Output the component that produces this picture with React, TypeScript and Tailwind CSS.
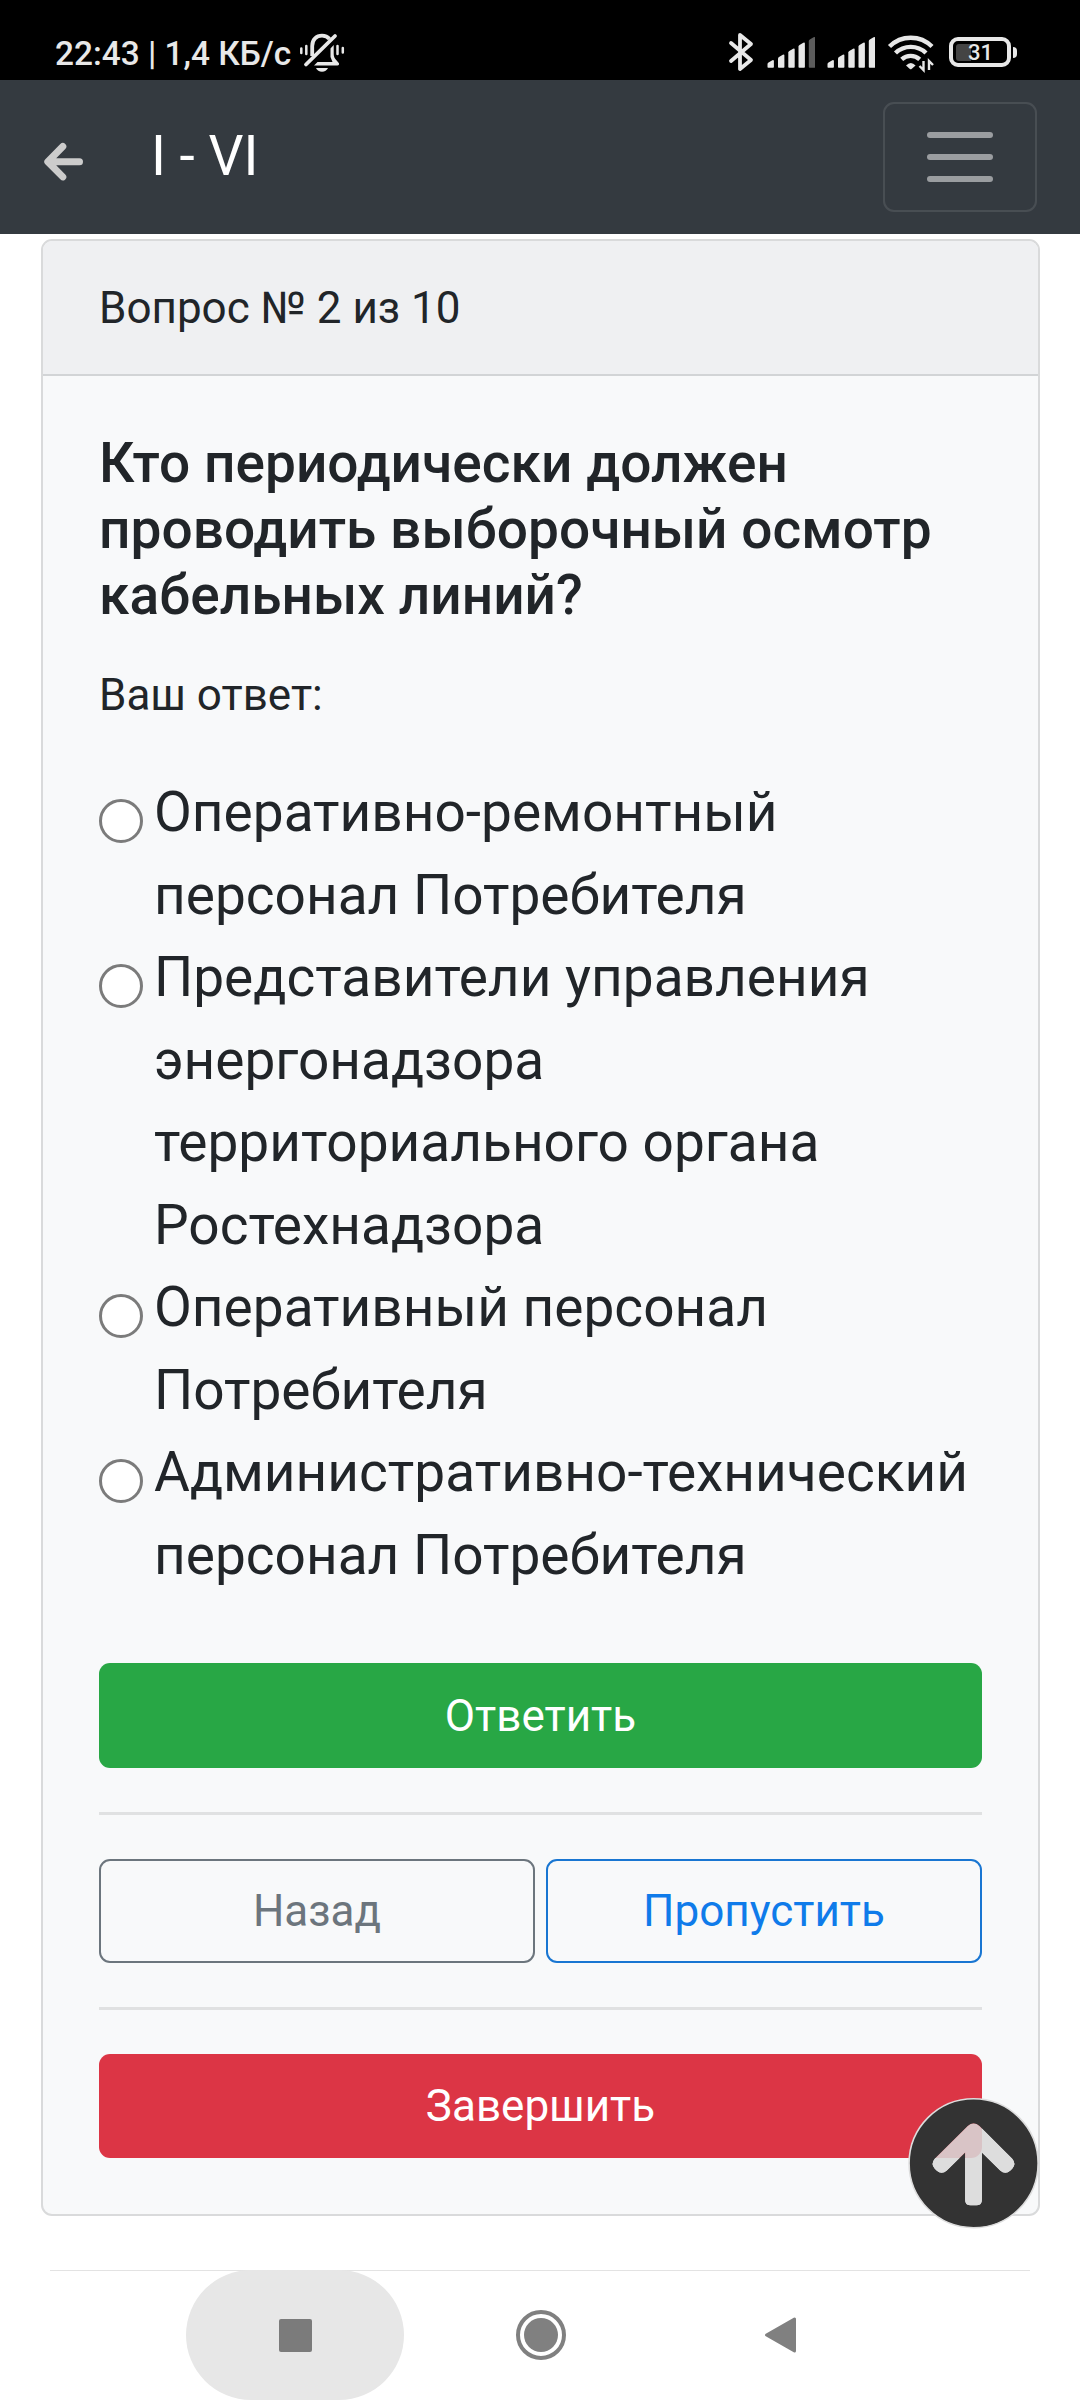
const answers = [
  "Оперативно-ремонтный персонал Потребителя",
  "Представители управления энергонадзора территориального органа Ростехнадзора",
  "Оперативный персонал Потребителя",
  "Административно-технический персонал Потребителя",
];

const signalBars = [
  { x: 767.5, top: 60 },
  { x: 778, top: 54.5 },
  { x: 788.3, top: 48.5 },
  { x: 798.5, top: 42.5 },
  { x: 808.8, top: 37 },
];

function BellOffIcon() {
  return (
    <svg className="ml-2 h-[45px] w-[46px]" viewBox="299 30 46 45" fill="none" stroke="#e8e8e8">
      <path d="M312.200 56V46c0-6.500 4.300-10.300 9.800-10.300 3.200 0 5.800 1.200 7.500 3.200" strokeWidth="3.800" />
      <path d="M330.500 48.500l3.200-3.500v9c0 2.500 1 4.500 2.500 6l2.800 3.200q.5 2.300-1.500 2.300H314l3.500-3.500h15l-2-5z" fill="#e8e8e8" stroke="none" />
      <path d="M335 36L306 64.500" strokeWidth="3.800" strokeLinecap="round" />
      <path d="M316 68h12c-1 2.400-3.300 3.700-6 3.700s-5-1.300-6-3.700z" fill="#e8e8e8" stroke="none" />
      <path d="M301.300 48.500v4.500M306.300 46v8M337.500 46v8M342.800 48v4.500" strokeWidth="2.500" strokeLinecap="round" />
    </svg>
  );
}

function BluetoothIcon() {
  return (
    <svg className="h-[45px] w-[26px]" viewBox="728 30 26 45" fill="none" stroke="#e8e8e8">
      <path
        d="M731 43l20 17-11 9V35l11 9-20 17"
        strokeWidth="3.800"
        strokeLinecap="round"
        strokeLinejoin="round"
      />
    </svg>
  );
}

function SignalIcon({ weak = false }: { weak?: boolean }) {
  return (
    <svg className="h-[45px] w-[48px]" viewBox="767 30 48 45">
      {signalBars.map((bar, i) => (
        <path
          key={bar.x}
          d={`M${bar.x} 67V${bar.top + 4}q0-1 1-1.600l3.800-2.200q1.600-.6 1.600 1V67q0 .8-.8.8h-4.800q-.8 0-.8-.8z`}
          fill={weak && i === 4 ? "#5c5c5c" : "#e8e8e8"}
        />
      ))}
    </svg>
  );
}

function WifiIcon() {
  return (
    <svg className="h-[45px] w-[48px]" viewBox="887 30 48 45" fill="none" stroke="#e8e8e8">
      <path d="M889.500 46.500a30 30 0 0 1 42.500 0" strokeWidth="4.400" />
      <path d="M895.500 53a22 22 0 0 1 30.500 0" strokeWidth="4.400" />
      <path d="M901.700 59.300a13.500 13.500 0 0 1 18 0" strokeWidth="4.400" />
      <path d="M906 65.500q4.800-5 9.600 0L911.500 69q-.8.600-1.600 0z" fill="#e8e8e8" stroke="none" />
      <path d="M923.500 61v9l-4-4M929 70V61l4 4" strokeWidth="2.400" />
    </svg>
  );
}

function Battery() {
  return (
    <div className="mt-[7px] flex items-center gap-0.5">
      <div className="flex h-[30px] w-[62px] items-center rounded-[9px] border-4 border-[#e8e8e8] pl-[3px]">
        <div className="h-[17px] w-[15px] rounded-l-[3px] bg-[#444]" />
        <span className="-ml-[3px] pt-0.5 text-[22px] leading-[22px] font-medium text-[#e8e8e8]">31</span>
      </div>
      <div className="h-[11px] w-1 rounded-r-sm bg-[#e8e8e8]" />
    </div>
  );
}

function StatusBar() {
  return (
    <div className="flex h-20 items-start bg-black pt-[30px] pr-[63px] pl-[55px]">
      <span className="mt-[7px] text-[33.4px] leading-[34px] font-medium whitespace-nowrap text-[#e8e8e8]">
        22:43 | 1,4 КБ/с
      </span>
      <BellOffIcon />
      <div className="ml-auto flex items-start">
        <BluetoothIcon />
        <div className="ml-[13px]">
          <SignalIcon weak />
        </div>
        <div className="ml-[12px]">
          <SignalIcon />
        </div>
        <div className="ml-[12px]">
          <WifiIcon />
        </div>
        <div className="ml-[14px]">
          <Battery />
        </div>
      </div>
    </div>
  );
}

function Navbar() {
  return (
    <header className="flex h-[154px] items-center bg-[#343a40] pr-[43px] pl-[43px]">
      <button className="mt-[9px]" aria-label="Назад">
        <svg className="h-10 w-[42px]" viewBox="43 142 42 40" fill="none" stroke="#ccc">
          <path
            d="M62.800 146.500L47.800 161.700l15 15.200M49 161.700h30.500"
            strokeWidth="7"
            strokeLinecap="round"
            strokeLinejoin="round"
          />
        </svg>
      </button>
      <h1 className="ml-[66px] pb-0.5 text-[55px] leading-[82px] text-white">I - VI</h1>
      <button
        className="ml-auto flex h-[110px] w-[154px] flex-col items-center justify-center gap-4 rounded-[11px] border-2 border-white/10"
        aria-label="Меню"
      >
        <span className="h-1.5 w-[66px] rounded-full bg-white/50" />
        <span className="h-1.5 w-[66px] rounded-full bg-white/50" />
        <span className="h-1.5 w-[66px] rounded-full bg-white/50" />
      </button>
    </header>
  );
}

function QuestionCard() {
  return (
    <section className="mt-[5px] ml-[41px] w-[999px] rounded-[11px] border-2 border-[#d9dadb] bg-[#f8f9fa]">
      <div className="h-[135px] rounded-t-[9px] border-b-2 border-[#d2d4d6] bg-[#eff0f2] px-14 pt-[34px] leading-[66px]">
        Вопрос № 2 из 10
      </div>
      <div className="px-14 pt-[54px] pb-14">
        <h2 className="text-[55px] leading-[66px] font-medium tracking-[0.05px]">
          Кто периодически должен проводить выборочный осмотр кабельных линий?
        </h2>
        <p className="mt-[34px] leading-[66px]">Ваш ответ:</p>

        <div className="mt-[43px] text-[55px] leading-[82.5px]">
          {answers.map((answer) => (
            <label key={answer} className="flex items-start">
              <input
                type="radio"
                name="answer"
                className="mt-7 size-11 shrink-0 appearance-none rounded-full border-3 border-[#7b7b7b] bg-white"
              />
              <span className="ml-[11px]">{answer}</span>
            </label>
          ))}
        </div>

        <button className="mt-[67px] h-[105px] w-full rounded-[11px] bg-[#28a745] text-white">
          Ответить
        </button>
        <hr className="mt-11 border-t-3 border-[#e0e1e2]" />
        <div className="mt-11 flex gap-[11px]">
          <button className="h-[104px] flex-1 rounded-[11px] border-2 border-[#6c757d] text-[#6c757d]">
            Назад
          </button>
          <button className="h-[104px] flex-1 rounded-[11px] border-2 border-[#1976d2] text-[#0f7bea]">
            Пропустить
          </button>
        </div>
        <hr className="mt-11 border-t-3 border-[#e0e1e2]" />
        <button className="mt-11 h-[104px] w-full rounded-[11px] bg-[#dc3545] text-white">
          Завершить
        </button>
      </div>
    </section>
  );
}

// The arrow is cut out of the disc, so the page shows through it slightly
function ScrollTopButton() {
  return (
    <button className="absolute top-[2097px] left-[907px]" aria-label="Наверх">
      <svg className="h-[133px] w-[133px]" viewBox="907 2097 133 133">
        <defs>
          <mask id="arrow-hole" maskUnits="userSpaceOnUse" x="907" y="2097" width="133" height="133">
            <rect x="907" y="2097" width="133" height="133" fill="#fff" />
            <path
              d="M967.800 2125.900q5.800-4.800 11.600 0l32.800 32.900q4.400 5.200 0 9.900l-1.800 1.800q-5 4.600-10.200 0L981.900 2152.400V2199.800q0 5.500-5.500 5.500h-5.800q-5.500 0-5.500-5.500V2152.400L946.800 2170.500q-5.200 4.600-10.200 0l-1.800-1.800q-4.400-4.700 0-9.900z"
              fill="#000"
            />
          </mask>
        </defs>
        <circle cx="973.600" cy="2163.200" r="64.500" fill="#333" stroke="#ddd" strokeWidth="1.600" mask="url(#arrow-hole)" />
        <path
          d="M967.800 2125.900q5.800-4.800 11.600 0l32.800 32.900q4.400 5.200 0 9.900l-1.800 1.800q-5 4.600-10.200 0L981.900 2152.400V2199.800q0 5.500-5.500 5.500h-5.800q-5.500 0-5.500-5.500V2152.400L946.800 2170.500q-5.200 4.600-10.200 0l-1.800-1.800q-4.400-4.700 0-9.900z"
          fill="#d8d8d8"
          fillOpacity="0.88"
        />
      </svg>
    </button>
  );
}

function SystemNav() {
  return (
    <nav className="mt-auto flex h-[130px] flex-col">
      <div className="mx-[50px] h-px bg-[#e3e3e3]" />
      <div className="-mt-px flex h-[130px] items-center">
        <div className="ml-[185.5px] flex h-[130px] w-[218.5px] items-center justify-center rounded-full bg-[#e7e7e7]">
          <div className="ml-0.5 size-[33px] rounded-[2px] bg-[#7b7b7b]" />
        </div>
        <div className="ml-[111.5px] flex size-[50px] items-center justify-center rounded-full border-4 border-[#808080]">
          <div className="size-[34px] rounded-full bg-[#808080]" />
        </div>
        <svg className="ml-[198px] h-10 w-[34px]" viewBox="0 0 34 40">
          <path d="M2.500 20L30.500 4v32z" fill="#808080" stroke="#808080" strokeWidth="3" strokeLinejoin="round" />
        </svg>
      </div>
    </nav>
  );
}

export default function App() {
  return (
    <div className="relative flex h-[2400px] w-[1080px] flex-col overflow-hidden bg-white font-[Roboto,sans-serif] text-[44px] text-[#212529]">
      <StatusBar />
      <Navbar />
      <QuestionCard />
      <SystemNav />
      <ScrollTopButton />
    </div>
  );
}
